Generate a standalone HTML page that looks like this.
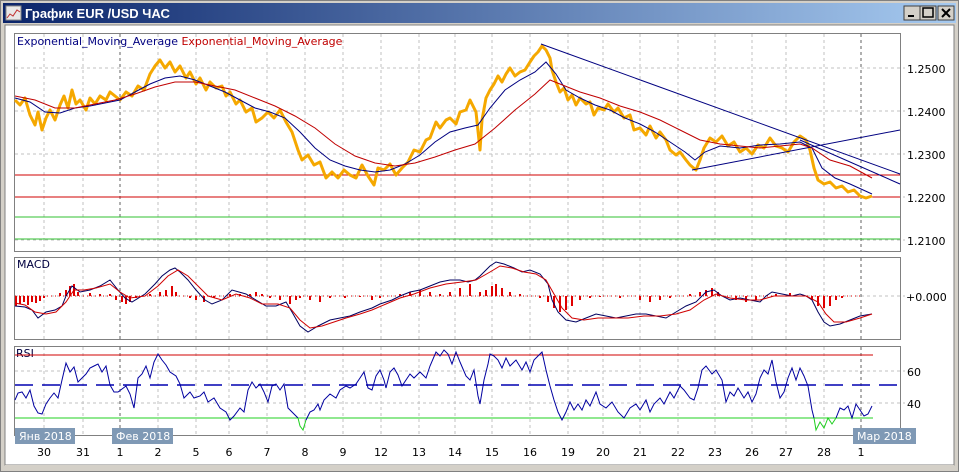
<!DOCTYPE html>
<html><head><meta charset="utf-8"><style>
html,body{margin:0;padding:0;width:959px;height:472px;overflow:hidden;background:#d4d0c8;font-family:"Liberation Sans","DejaVu Sans",sans-serif}
</style></head><body>
<svg width="959" height="472" xmlns="http://www.w3.org/2000/svg" style="position:absolute;left:0;top:0">
<defs>
<linearGradient id="tb" x1="0" x2="1"><stop offset="0" stop-color="#0a246a"/><stop offset="1" stop-color="#a6caf0"/></linearGradient>
</defs>
<rect x="0" y="0" width="959" height="472" fill="#d4d0c8"/>
<rect x="0.5" y="0.5" width="958" height="471" fill="none" stroke="#808080"/>
<rect x="3" y="3" width="953" height="20" fill="url(#tb)"/>
<rect x="6" y="6" width="15" height="14" fill="#e8e8e8" stroke="#888"/>
<polyline points="7,18 10,14 13,16 17,10 20,12" fill="none" stroke="#c03030" stroke-width="1"/>
<text x="25" y="18" fill="#fff" font-size="13" font-weight="bold" font-family="Liberation Sans, DejaVu Sans, sans-serif">График EUR /USD  ЧАС</text>
<g font-size="12" font-weight="bold">
<rect x="904" y="6" width="16" height="14" fill="#d4d0c8" stroke="#404040"/><rect x="908" y="15" width="6" height="2" fill="#000"/>
<rect x="920" y="6" width="16" height="14" fill="#d4d0c8" stroke="#404040"/><rect x="923" y="8" width="10" height="9" fill="none" stroke="#000" stroke-width="1.5"/>
<rect x="938" y="6" width="16" height="14" fill="#d4d0c8" stroke="#404040"/><path d="M942 9 L950 17 M950 9 L942 17" stroke="#000" stroke-width="2"/>
</g>
<rect x="5" y="25" width="949" height="440" fill="#fff" stroke="#808080"/>
<rect x="5" y="465" width="949" height="3" fill="#d4d0c8"/>
<g fill="none" stroke="#808080">
<rect x="14.5" y="33.5" width="886" height="218"/>
<rect x="14.5" y="257.5" width="886" height="82"/>
<rect x="14.5" y="346.5" width="886" height="89"/>
</g>
<g stroke="#c0c0c0" stroke-dasharray="3,3">
<path d="M44 34V251M83 34V251M120 34V251M158 34V251M196 34V251M229 34V251M267 34V251M305 34V251M343 34V251M381 34V251M419 34V251M455 34V251M492 34V251M530 34V251M568 34V251M603 34V251M640 34V251M678 34V251M715 34V251M752 34V251M786 34V251M824 34V251M861 34V251"/>
<path d="M44 258V339M83 258V339M120 258V339M158 258V339M196 258V339M229 258V339M267 258V339M305 258V339M343 258V339M381 258V339M419 258V339M455 258V339M492 258V339M530 258V339M568 258V339M603 258V339M640 258V339M678 258V339M715 258V339M752 258V339M786 258V339M824 258V339M861 258V339"/>
<path d="M44 347V435M83 347V435M120 347V435M158 347V435M196 347V435M229 347V435M267 347V435M305 347V435M343 347V435M381 347V435M419 347V435M455 347V435M492 347V435M530 347V435M568 347V435M603 347V435M640 347V435M678 347V435M715 347V435M752 347V435M786 347V435M824 347V435M861 347V435"/>
<path d="M15 68H905M15 111H905M15 154H905M15 197H905M15 240H905"/>
<path d="M15 296H905M15 371H905M15 403H905"/>
</g>
<path d="M120 34V251M120 258V339M120 347V440M861 34V251M861 258V339M861 347V440" stroke="#606060" stroke-dasharray="3,3"/>
<path d="M15 175H900M15 197H900" stroke="#d00000"/>
<path d="M15 217H900M15 239H900" stroke="#30c030"/>
<g font-size="11" fill="#000" font-family="DejaVu Sans, Liberation Sans, sans-serif">
<text x="907" y="73">1.2500</text><text x="907" y="116">1.2400</text><text x="907" y="159">1.2300</text><text x="907" y="202">1.2200</text><text x="907" y="245">1.2100</text>
<text x="906" y="301">+0.000</text>
<text x="907" y="376">60</text><text x="907" y="408">40</text>
<text x="17" y="45" fill="#000080">Exponential_Moving_Average <tspan fill="#c00000">Exponential_Moving_Average</tspan></text>
<text x="17" y="268" fill="#000040">MACD</text>
<text x="16" y="357" fill="#000040">RSI</text>
<g text-anchor="middle">
<text x="44" y="456">30</text><text x="83" y="456">31</text><text x="120" y="456">1</text><text x="158" y="456">2</text><text x="196" y="456">5</text><text x="229" y="456">6</text><text x="267" y="456">7</text><text x="305" y="456">8</text><text x="343" y="456">9</text><text x="381" y="456">12</text><text x="419" y="456">13</text><text x="455" y="456">14</text><text x="492" y="456">15</text><text x="530" y="456">16</text><text x="568" y="456">19</text><text x="603" y="456">20</text><text x="640" y="456">21</text><text x="678" y="456">22</text><text x="715" y="456">23</text><text x="752" y="456">26</text><text x="786" y="456">27</text><text x="824" y="456">28</text><text x="861" y="456">1</text>
</g>
</g>
<polyline fill="none" stroke="#f5a800" stroke-width="3" stroke-linejoin="round" points="15,100 20,105 25,98 30,115 35,125 38,112 42,130 46,118 50,110 55,120 60,105 64,96 68,108 72,90 76,104 80,100 86,110 90,98 95,104 100,96 106,100 110,92 115,96 120,100 126,92 132,96 138,86 144,90 150,74 155,66 160,60 165,68 170,62 175,72 180,66 186,78 190,72 196,84 200,78 206,90 210,82 216,88 222,86 226,96 230,92 236,104 240,100 246,112 252,108 256,122 262,118 268,112 274,118 280,110 286,122 292,132 298,150 302,160 308,155 314,165 320,162 326,178 332,172 338,178 344,170 350,175 356,178 362,165 368,176 374,185 378,168 384,170 390,164 396,175 402,168 408,162 414,150 420,152 426,140 430,138 436,122 440,128 446,120 450,118 456,124 460,112 466,110 470,100 476,112 480,150 482,120 486,98 490,90 494,84 498,76 502,82 506,74 510,68 515,76 520,72 525,70 530,62 534,56 538,52 542,46 546,50 550,58 552,70 556,82 560,92 564,88 568,100 572,95 576,105 580,98 586,104 590,102 594,115 598,108 604,110 608,104 614,112 618,108 624,118 630,115 634,130 640,128 646,135 650,126 656,138 660,132 666,140 670,150 676,155 680,152 686,160 690,165 696,170 700,160 704,148 710,138 716,142 722,136 728,146 734,142 740,152 746,148 752,154 758,145 764,148 770,138 776,146 782,148 788,152 794,142 800,136 806,140 810,150 814,168 818,180 824,184 830,182 836,188 842,186 848,192 854,190 860,196 866,198 872,196"/>
<polyline fill="none" stroke="#000080" points="15,98 30,102 45,112 60,113 75,108 90,106 105,103 120,100 135,92 150,84 165,78 180,76 195,80 210,86 225,92 240,100 255,108 270,112 285,118 300,132 315,148 330,160 345,166 360,170 375,172 390,170 405,164 420,155 435,142 450,132 465,128 478,125 490,108 505,90 520,80 535,72 546,62 556,74 566,90 580,98 595,105 610,110 625,118 640,124 655,132 670,142 685,152 695,160 705,152 720,146 740,148 760,145 780,144 800,142 812,148 822,168 835,178 850,184 872,194"/>
<polyline fill="none" stroke="#c00000" points="15,96 35,100 55,108 75,108 95,104 115,100 135,94 155,87 175,82 195,82 215,86 235,90 255,98 275,106 295,116 315,128 335,144 355,156 375,163 395,166 415,163 435,157 455,150 475,144 495,128 515,110 535,94 550,80 565,86 580,92 600,98 620,106 640,112 660,120 680,130 700,140 720,144 740,146 760,148 780,146 800,144 812,148 830,160 850,166 872,178"/>
<path d="M541 44L900 174M692 170L900 130M800 140L900 184" stroke="#000080" fill="none"/>
<g stroke="#e00000" stroke-width="2">
<path d="M16 296V306M20 296V304M24 296V302M28 296V305M32 296V302M36 296V303M40 296V301M44 296V298M60 296V293M66 296V290M70 296V286M74 296V284M78 296V292M90 296V293M100 296V294M110 296V294M116 296V300M122 296V302M126 296V304M130 296V302M136 296V298M150 296V294M160 296V292M166 296V290M172 296V286M176 296V292M190 296V298M196 296V300M204 296V302M214 296V298M230 296V294M240 296V294M250 296V294M256 296V292M262 296V294M270 296V298M280 296V300M290 296V304M296 296V300M300 296V298M310 296V300M320 296V302M330 296V298M345 296V298M360 296V297M372 296V300M380 296V298M390 296V296M400 296V294M410 296V292M420 296V290M430 296V292M440 296V294M450 296V292M460 296V288M470 296V284M480 296V292M486 296V290M492 296V286M496 296V284M502 296V288M510 296V292M520 296V294M530 296V296M540 296V298M548 296V302M554 296V308M560 296V312M566 296V310M572 296V306M580 296V300M590 296V298M600 296V297M620 296V298M640 296V300M650 296V302M660 296V300M670 296V298M680 296V296M690 296V294M700 296V292M706 296V290M712 296V288M718 296V292M726 296V296M736 296V300M746 296V302M756 296V300M766 296V296M776 296V294M790 296V293M800 296V296M812 296V300M818 296V306M824 296V308M830 296V306M836 296V300M842 296V298"/>
</g>
<path d="M15 296H860" stroke="#e00000" stroke-dasharray="1,3"/>
<polyline fill="none" stroke="#000060" points="15,306 25,307 32,310 38,318 46,312 55,310 62,306 66,296 72,286 80,292 90,290 100,286 110,280 118,290 125,298 132,302 145,294 155,284 162,276 170,270 175,268 180,272 188,280 196,290 205,300 212,304 222,300 232,290 246,294 256,300 266,306 276,306 286,302 292,312 300,326 308,332 318,326 330,320 340,318 350,316 360,312 372,308 380,304 392,300 400,296 410,292 420,290 430,286 440,282 450,280 460,280 468,282 475,280 480,276 486,270 490,266 496,262 504,264 514,268 522,272 530,270 540,274 548,284 552,300 558,312 566,320 576,322 586,318 596,314 606,316 616,318 626,316 636,314 646,314 656,316 666,318 676,312 686,306 696,302 706,292 714,290 722,296 730,300 740,298 750,300 760,302 766,296 772,292 782,294 792,296 800,294 806,296 812,300 818,312 824,322 830,326 840,324 850,320 860,316 872,314"/>
<polyline fill="none" stroke="#d00000" points="15,303 25,305 35,312 46,314 56,312 66,302 74,290 84,290 96,288 110,284 120,292 130,298 145,296 158,286 168,276 178,270 188,276 198,286 208,296 222,300 236,294 250,298 262,304 278,304 290,308 300,320 310,328 322,326 334,322 346,318 360,314 372,310 386,304 400,298 414,294 430,288 446,284 462,282 476,280 490,272 500,266 512,268 524,272 536,274 546,280 554,294 562,308 572,318 584,320 598,318 612,318 628,318 644,316 660,316 676,314 690,310 704,300 716,294 730,298 746,300 760,300 774,296 790,296 806,296 818,302 826,314 834,322 846,322 860,318 872,314"/>
<path d="M15 355H873" stroke="#d00000"/>
<path d="M15 385H900" stroke="#0000b0" stroke-width="1.5" stroke-dasharray="18,9"/>
<path d="M15 418H873" stroke="#20d020"/>
<polyline fill="none" stroke="#0000a0" points="15,400 18,393 22,392 26,398 30,390 34,406 38,413 42,414 46,404 50,398 54,393 58,398 62,380 66,363 70,372 74,367 78,382 82,378 86,374 90,368 94,366 98,364 102,372 106,366 110,385 114,392 118,392 122,389 126,386 130,394 134,408 138,378 142,374 146,366 150,378 154,362 158,354 162,360 166,365 170,372 176,376 180,384 184,398 190,392 194,398 200,396 204,392 208,402 214,398 220,408 226,412 230,420 234,416 240,408 244,412 248,390 252,382 256,388 260,384 264,392 268,402 272,386 276,384 280,390 284,384 288,408 294,414 298,418"/>
<polyline fill="none" stroke="#20d020" points="298,418 300,426 303,430 306,420"/>
<polyline fill="none" stroke="#0000a0" points="306,420 310,412 314,410 318,404 320,410 324,400 330,394 336,398 340,390 346,386 350,388 356,384 360,378 364,372 368,388 372,390 376,376 380,370 384,380 386,388 390,372 394,368 398,375 402,386 406,380 410,374 414,378 420,372 426,378 430,366 436,352 440,356 444,350 448,354 452,364 456,352 460,362 466,376 470,380 474,370 478,396 480,404 484,380 488,364 490,354 494,356 498,360 502,368 506,358 510,366 516,360 522,370 526,362 530,372 534,360 538,356 542,352 546,370 550,386 554,400 558,412 562,420 566,412 570,402 574,410 578,404 582,410 586,400 590,406 596,392 600,404 606,408 612,402 618,412 624,418 630,408 636,404 640,410 646,400 650,412 654,404 660,398 664,404 670,392 674,398 680,386 684,390 690,398 694,400 698,388 702,370 706,366 712,374 716,370 722,380 726,402 730,392 734,396 738,388 744,398 748,392 752,402 756,394 760,378 764,370 768,374 772,360 776,382 780,398 784,392 788,378 792,368 796,380 800,368 804,376 808,386 812,410 814,418"/>
<polyline fill="none" stroke="#20d020" points="814,418 816,430 820,422 824,428 828,418 832,424 836,418"/>
<polyline fill="none" stroke="#0000a0" points="836,418 840,408 844,410 848,406 852,418 856,404 860,410 864,416 868,414 872,406"/>
<g font-size="11" fill="#fff" font-family="DejaVu Sans, Liberation Sans, sans-serif">
<rect x="15" y="428" width="60" height="16" fill="#7f99b5"/><text x="19" y="440">Янв 2018</text>
<rect x="112" y="428" width="61" height="16" fill="#7f99b5"/><text x="116" y="440">Фев 2018</text>
<rect x="853" y="428" width="63" height="16" fill="#7f99b5"/><text x="857" y="440">Мар 2018</text>
</g>
</svg>
</body></html>
